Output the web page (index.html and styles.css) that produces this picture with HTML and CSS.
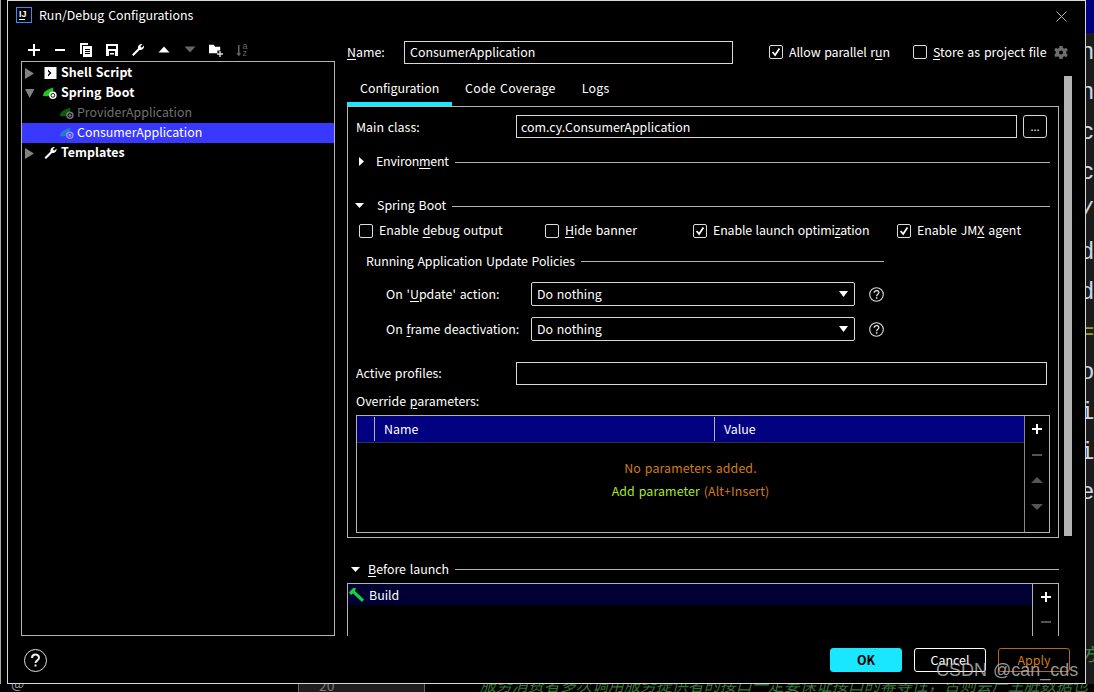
FILE: index.html
```html
<!DOCTYPE html>
<html lang="en">
<head>
<meta charset="utf-8">
<title>Run/Debug Configurations</title>
<link rel="stylesheet" href="styles.css">
</head>
<body>
<div class="desktop">
  <div class="edge-line"></div>
  <div class="navy-corner"></div>
  <div class="code-strip"><div class="c">n</div><div class="c">n</div><div class="c">c</div><div class="c">c</div><div class="c">/</div><div class="c">d</div><div class="c">d</div><div class="c olive">=</div><div class="c">o</div><div class="c">i</div><div class="c">i</div><div class="c">e</div><div class="c"></div><div class="c"></div><div class="c"></div><div class="c green">方</div></div>
  <div class="bottom-strip">
    <span class="gutter-at">@</span>
    <span class="gutter-num">20</span>
    <span class="comment">服务消费者多次调用服务提供者的接口一定要保证接口的幂等性，否则会产生脏数据也</span>
  </div>

  <div class="dialog">
    <header class="titlebar">
      <svg class="logo" viewBox="0 0 16 16"><rect x=".5" y=".5" width="15" height="15" fill="#000" stroke="#2f8fff"/><text x="3" y="9.500" class="logo-t">IJ</text><rect x="3" y="12" width="6" height="1" fill="#fff"/></svg>
      <span class="title">Run/Debug Configurations</span>
      <svg class="close" viewBox="0 0 11 11"><path d="M.5.5l10 10M10.500.5l-10 10" stroke="#bbb" fill="none"/></svg>
    </header>

    <div class="main">
      <aside class="left">
        <div class="toolbar">
          <span class="tool"><svg viewBox="0 0 14 14"><path d="M6 1h2v5h5v2H8v5H6V8H1V6h5z" fill="#fff"/></svg></span>
          <span class="tool"><svg viewBox="0 0 14 14"><path d="M2 6h10v2H2z" fill="#fff"/></svg></span>
          <span class="tool"><svg viewBox="0 0 14 14"><path d="M1 0h8v2H3v9H1z" fill="#fff"/><path d="M4 3h9v11H4zM6 6v1h5V6zm0 2v1h5V8zm0 2v1h5v-1z" fill="#fff" fill-rule="evenodd"/></svg></span>
          <span class="tool"><svg viewBox="0 0 14 14"><path d="M1 1h12v12H1zM3 3v3h8V3zM4 8v5h6V8z" fill="#fff" fill-rule="evenodd"/><path d="M5 10h4v1.500H5z" fill="#fff"/></svg></span>
          <span class="tool"><svg viewBox="0 0 14 14"><path d="M1 11.500l6-6C6.500 3 8.500.5 11.500 1L9.300 3.200l1.500 1.500L13 2.500c.5 3-2 5-4.500 4.500l-6 6z" fill="#fff"/></svg></span>
          <span class="tool"><svg viewBox="0 0 14 14"><path d="M7 3.500l5.500 6h-11z" fill="#fff"/></svg></span>
          <span class="tool"><svg viewBox="0 0 14 14"><path d="M1.500 3.500h11L7 9.500z" fill="#666"/></svg></span>
          <span class="tool"><svg viewBox="0 0 15 15"><path d="M0 2h5l1.500 2H12v4H9v3H0z" fill="#fff"/><path d="M11 8.500h1.500V11H15v1.500h-2.500V15H11v-2.500H8.500V11H11z" fill="#ddd"/></svg></span>
          <span class="tool"><svg viewBox="0 0 14 14"><path d="M3 2h1.500v8H6l-2.300 3.500L1.500 10H3z" fill="#666"/><text x="7.500" y="6" class="sort-t">a</text><text x="7.500" y="13" class="sort-t">z</text></svg></span>
        </div>
        <div class="tree">
          <div class="node"><svg class="tri" viewBox="0 0 9 11"><path d="M0 0l9 5.500L0 11z" fill="#808080"/></svg><svg class="nic" viewBox="0 0 14 14"><path d="M1 1h12v12H1z" fill="#fff"/><path d="M4.500 3.500L8 7l-3.500 3.500V8.500L6 7 4.500 5.500z" fill="#000"/></svg><b>Shell Script</b></div>
          <div class="node"><svg class="tri" viewBox="0 0 9 11"><path d="M0 1h9.500L4.700 10z" fill="#808080"/></svg><svg class="nic" viewBox="0 0 16 14"><path d="M0 10C0 5 5 3 11 1c0 3 0 5-2 7-3 3-6 3-9 2z" fill="#1ec81e"/><circle cx="10.500" cy="9.500" r="4" fill="#fff"/><circle cx="10.500" cy="9.500" r="2" fill="none" stroke="#000"/></svg><b>Spring Boot</b></div>
          <div class="node child"><svg class="nic" viewBox="0 0 16 14"><path d="M0 10C0 5 5 3 11 1c0 3 0 5-2 7-3 3-6 3-9 2z" fill="#0b5a0b"/><circle cx="10.500" cy="9.500" r="4" fill="#777"/><circle cx="10.500" cy="9.500" r="2" fill="none" stroke="#000"/></svg><span class="dim">ProviderApplication</span></div>
          <div class="node child selected"><svg class="nic" viewBox="0 0 16 14"><path d="M0 10C0 5 5 3 11 1c0 3 0 5-2 7-3 3-6 3-9 2z" fill="#2a78c8"/><circle cx="10.500" cy="9.500" r="4" fill="#8f8fff"/><circle cx="10.500" cy="9.500" r="2" fill="none" stroke="#3838ff"/></svg><span>ConsumerApplication</span></div>
          <div class="node"><svg class="tri" viewBox="0 0 9 11"><path d="M0 0l9 5.500L0 11z" fill="#808080"/></svg><svg class="nic" viewBox="0 0 14 14"><path d="M1 11.500l6-6C6.500 3 8.500.5 11.500 1L9.300 3.200l1.500 1.500L13 2.500c.5 3-2 5-4.500 4.500l-6 6z" fill="#fff"/></svg><b>Templates</b></div>
        </div>
      </aside>

      <section class="right">
        <div class="name-row">
          <label class="name-label"><u>N</u>ame:</label>
          <div class="input name-input">ConsumerApplication</div>
          <span class="check on allow"><svg viewBox="0 0 14 14"><path d="M3 7l3 3.500L11 3" fill="none" stroke="#fff" stroke-width="2"/></svg></span>
          <span class="allow-text">Allow parallel r<u>u</u>n</span>
          <span class="check store"></span>
          <span class="store-text"><u>S</u>tore as project file</span>
          <svg class="gear" viewBox="0 0 14 14"><path d="M5.500 0h3l.4 2 1.600.8 1.800-1 1.500 2.500-1.500 1.300v1.800l1.500 1.300-1.500 2.500-1.800-1-1.600.8-.4 2h-3l-.4-2-1.600-.8-1.800 1L.2 8.700l1.500-1.300V5.600L.2 4.300l1.500-2.500 1.800 1 1.600-.8zM7 4.500a2 2 0 100 4 2 2 0 000-4z" fill="#6e6e6e" fill-rule="evenodd"/></svg>
        </div>

        <nav class="tabs">
          <span class="tab active">Configuration</span>
          <span class="tab second">Code Coverage</span>
          <span class="tab third">Logs</span>
        </nav>

        <div class="panel">
          <div class="form-row main-class">
            <label class="field-label">Main class:</label>
            <div class="input main-input">com.cy.ConsumerApplication</div>
            <span class="dots">...</span>
          </div>

          <div class="divider env">
            <svg class="small-tri" viewBox="0 0 9 9"><path d="M2 0l5 4.500L2 9z" fill="#fff"/></svg>
            <span class="env-text">Environ<u>m</u>ent</span><i class="line"></i>
          </div>

          <div class="divider sb">
            <svg class="small-tri" viewBox="0 0 9 9"><path d="M0 2h9L4.500 7z" fill="#fff"/></svg>
            <span class="sb-text">Sprin<u>g</u> Boot</span><i class="line"></i>
          </div>

          <div class="checks">
            <div class="opt"><span class="check"></span><span>Enable <u>d</u>ebug output</span></div>
            <div class="opt"><span class="check"></span><span><u>H</u>ide banner</span></div>
            <div class="opt"><span class="check on"><svg viewBox="0 0 14 14"><path d="M3 7l3 3.500L11 3" fill="none" stroke="#fff" stroke-width="2"/></svg></span><span class="launch-opt">Enable launch optimi<u>z</u>ation</span></div>
            <div class="opt"><span class="check on"><svg viewBox="0 0 14 14"><path d="M3 7l3 3.500L11 3" fill="none" stroke="#fff" stroke-width="2"/></svg></span><span>Enable JM<u>X</u> agent</span></div>
          </div>

          <div class="divider policies"><span class="policies-text">Running Application Update Policies</span><i class="line"></i></div>

          <div class="policy first">
            <label>On '<u>U</u>pdate' action:</label>
            <div class="select">Do nothing<svg class="caret" viewBox="0 0 9 6"><path d="M0 0h9L4.500 6z" fill="#fff"/></svg></div>
            <svg class="help" viewBox="0 0 15 15"><circle cx="7.500" cy="7.500" r="6.800" fill="none" stroke="#ddd" stroke-width="1.100"/><path d="M5.200 5.800c0-3 4.700-3 4.700-.2 0 1.700-2.300 1.700-2.300 3.600" fill="none" stroke="#ddd" stroke-width="1.300"/><rect x="6.900" y="10.200" width="1.500" height="1.500" fill="#ddd"/></svg>
          </div>
          <div class="policy">
            <label>On <u>f</u>rame deactivation:</label>
            <div class="select">Do nothing<svg class="caret" viewBox="0 0 9 6"><path d="M0 0h9L4.500 6z" fill="#fff"/></svg></div>
            <svg class="help" viewBox="0 0 15 15"><circle cx="7.500" cy="7.500" r="6.800" fill="none" stroke="#ddd" stroke-width="1.100"/><path d="M5.200 5.800c0-3 4.700-3 4.700-.2 0 1.700-2.300 1.700-2.300 3.600" fill="none" stroke="#ddd" stroke-width="1.300"/><rect x="6.900" y="10.200" width="1.500" height="1.500" fill="#ddd"/></svg>
          </div>

          <div class="form-row profiles">
            <label class="field-label">Active profiles:</label>
            <div class="input profile-input"></div>
          </div>

          <div class="override-label">Override <u>p</u>arameters:</div>

          <div class="table">
            <div class="table-main">
              <div class="thead"><span class="th-check"></span><span class="th-name">Name</span><span class="th-value">Value</span></div>
              <div class="tbody">
                <div class="empty">No parameters added.</div>
                <div class="add"><span class="add-link">Add parameter</span> <span class="shortcut">(Alt+Insert)</span></div>
              </div>
            </div>
            <div class="side">
              <svg viewBox="0 0 12 12"><path d="M5 1h2v4h4v2H7v4H5V7H1V5h4z" fill="#fff"/></svg>
              <svg viewBox="0 0 12 12"><path d="M1 5h10v2H1z" fill="#555"/></svg>
              <svg viewBox="0 0 12 12"><path d="M6 2l6 6H0z" fill="#555"/></svg>
              <svg viewBox="0 0 12 12"><path d="M0 3h12l-6 6z" fill="#555"/></svg>
            </div>
          </div>
        </div>

        <div class="divider before">
          <svg class="small-tri" viewBox="0 0 9 9"><path d="M0 2h9L4.500 7z" fill="#fff"/></svg>
          <span class="before-text"><u>B</u>efore launch</span><i class="line"></i>
        </div>

        <div class="launch">
          <div class="launch-main">
            <div class="build"><svg class="hammer" viewBox="0 0 15 14"><path d="M0 4.500L4 0h3L6 3l9 8.500-2 2.500-9-8.500-2 1.500z" fill="#14d23c"/></svg><span>Build</span></div>
          </div>
          <div class="launch-side">
            <svg viewBox="0 0 12 12"><path d="M5 1h2v4h4v2H7v4H5V7H1V5h4z" fill="#fff"/></svg>
            <svg viewBox="0 0 12 12"><path d="M1 5h10v2H1z" fill="#555"/></svg>
          </div>
        </div>

        <div class="scrollbar"></div>
      </section>
    </div>

    <footer class="footer">
      <svg class="big-help" viewBox="0 0 23 23"><circle cx="11.500" cy="11.500" r="11" fill="none" stroke="#ddd"/><path d="M8 9c0-4.500 7-4.500 7-.3 0 2.700-3.500 2.600-3.500 5.300" fill="none" stroke="#eee" stroke-width="2"/><rect x="10.500" y="15.500" width="2" height="2" fill="#eee"/></svg>
      <div class="buttons">
        <button class="btn ok">OK</button>
        <button class="btn cancel">Cancel</button>
        <button class="btn apply">Apply</button>
      </div>
    </footer>
  </div>

  <div class="watermark">CSDN @can_cds</div>
</div>
</body>
</html>
```
FILE: styles.css
```css
* { box-sizing: border-box; }
html, body { margin: 0; padding: 0; height: 100%; overflow: hidden; background: #1b1b1b; }
body { font: 12.4px/20px "Noto Sans CJK SC", "Noto Sans", sans-serif; word-spacing: 1px; color: #fff; }
u { text-underline-offset: 2px; }
.desktop { position: relative; width: 1094px; height: 692px; overflow: hidden; }
.edge-line { position: absolute; left: 0; top: 0; width: 7px; height: 684px; background: #000; border-left: 1px solid #aaa; }
.navy-corner { position: absolute; right: 0; top: 0; width: 8px; height: 33px; background: #000080; }
.code-strip { position: absolute; left: 1086px; top: 33px; width: 8px; height: 651px; overflow: hidden; font: 24px/40px "Liberation Mono", monospace; color: #c9d8e6; }
.c { height: 40px; margin-left: -6px; }
.olive { color: #9a9a30; }
.green { color: #3f8a3f; font-family: "Noto Sans CJK SC", sans-serif; font-style: italic; font-size: 18px; }
.bottom-strip { position: absolute; left: 0; top: 684px; width: 1094px; height: 8px; overflow: hidden; background: #000; }
.gutter-at { position: absolute; left: 11px; top: -11px; font-size: 14px; color: #999; }
.gutter-num { position: absolute; left: 298px; top: 0; width: 127px; height: 8px; padding-left: 20px; background: #1e1e1e; border: solid #666; border-width: 0 1px; font-size: 14px; line-height: 2px; color: #777; }
.comment { position: absolute; left: 480px; top: -10px; font-size: 16px; font-style: italic; white-space: nowrap; color: #357535; }

.dialog { position: absolute; left: 7px; top: 0; width: 1079px; height: 684px; background: #000; border: 1px solid #d8d8d8; display: flex; flex-direction: column; }
.titlebar { height: 39px; flex: none; display: flex; align-items: flex-start; padding: 6px 0 0 8px; }
.logo { width: 16px; height: 16px; flex: none; }
.logo-t { font: bold 9px "Liberation Sans", sans-serif; fill: #fff; }
.title { margin: -1px 0 0 7px; line-height: 18px; }
.close { width: 11px; height: 11px; margin: 4px 18px 0 auto; }

.main { flex: 1; min-height: 0; display: flex; padding-left: 13px; }
.left { width: 314px; flex: none; display: flex; flex-direction: column; }
.toolbar { height: 21px; flex: none; display: flex; align-items: flex-start; }
.tool { width: 26px; height: 20px; display: flex; align-items: center; justify-content: center; }
.tool svg { width: 14px; height: 14px; overflow: visible; }
.sort-t { font: 9px "Liberation Sans", sans-serif; fill: #666; }
.tree { flex: 1; border: 1px solid #b4b4b4; padding-top: 1px; }
.node { height: 20px; display: flex; align-items: center; padding-left: 3px; white-space: nowrap; }
.node b { font-weight: 700; letter-spacing: .05px; }
.node span, .node b { position: relative; top: -1px; }
.tri { width: 9px; height: 11px; flex: none; margin-right: 9px; }
.nic { width: 15px; height: 14px; flex: none; margin-right: 3px; }
.child { padding-left: 38px; }
.child .nic { margin-right: 2px; }
.dim { color: #707070; }
.selected { background: #3838ff; }

.right { position: relative; margin-left: 12px; width: 725px; flex: none; overflow: hidden; }
.name-row { height: 24px; display: flex; align-items: center; white-space: nowrap; }
.name-label { width: 57px; flex: none; }
.input { border: 1px solid #d8d8d8; padding-left: 5px; height: 23px; line-height: 20px; flex: none; }
.name-input { width: 329px; }
.check { width: 14px; height: 14px; border: 1px solid #ddd; border-radius: 2px; flex: none; display: block; }
.check svg { display: block; width: 12px; height: 12px; }
.allow { margin-left: 36px; }
.allow-text { margin-left: 6px; width: 124px; flex: none; letter-spacing: -.1px; }
.store-text { margin-left: 6px; }
.gear { width: 14px; height: 14px; position: absolute; left: 707px; top: 6px; }
.tabs { height: 42px; display: flex; }
.tab { line-height: 20px; padding-top: 14px; }
.tab.active { width: 105px; padding-left: 13px; border-bottom: 4px solid #19e6ff; }
.second { margin-left: 13px; letter-spacing: .25px; }
.third { margin-left: 26px; letter-spacing: .2px; }

.panel { width: 712px; height: 432px; border: 1px solid #b4b4b4; padding: 8px 8px 0; }
.form-row { display: flex; align-items: center; }
.form-row label { position: relative; top: -1px; }
.main-class label { top: 0; }
.field-label { width: 160px; flex: none; }
.main-input { width: 501px; line-height: 22px; padding-left: 4px; }
.dots { width: 24px; height: 23px; margin-left: 6px; border: 1px solid #d8d8d8; border-radius: 3px; text-align: center; line-height: 20px; font-size: 11px; }
.divider { display: flex; align-items: center; height: 20px; white-space: nowrap; }
.divider > span { position: relative; top: -1px; }
.line { flex: 1; height: 1px; background: #b4b4b4; margin-left: 6px; }
.small-tri { width: 9px; height: 9px; flex: none; }
.env { margin-top: 14px; }
.env .small-tri { margin-left: 1px; position: relative; top: -1px; }
.env-text { margin-left: 10px; letter-spacing: -.2px; }
.sb { margin-top: 24px; }
.sb .small-tri { margin-left: -1px; position: relative; top: -1px; }
.sb-text { margin-left: 13px; }
.checks { margin: 5px 0 0 3px; height: 20px; display: grid; grid-template-columns: 186px 148px 204px 1fr; }
.opt { display: flex; align-items: center; white-space: nowrap; }
.opt > span:last-child { position: relative; top: -1px; }
.opt .check { margin-right: 6px; }
.launch-opt { letter-spacing: -.15px; }
.policies { margin: 10px 0 0 10px; width: 518px; }
.divider > .policies-text { letter-spacing: -.1px; top: 0; }
.policy { display: flex; align-items: center; margin: 11px 0 0 30px; }
.policy label { width: 145px; flex: none; }
.select { width: 324px; height: 24px; flex: none; border: 1px solid #d8d8d8; border-radius: 2px; padding-left: 5px; line-height: 22px; position: relative; }
.caret { position: absolute; right: 6px; top: 8px; width: 9px; height: 6px; }
.help { width: 15px; height: 15px; margin-left: 14px; }
.profiles { margin-top: 21px; }
.profile-input { width: 531px; }
.override-label { margin-top: 6px; }
.table { margin-top: 4px; width: 694px; height: 118px; border: 1px solid #b4b4b4; display: flex; }
.table-main { width: 667px; flex: none; display: flex; flex-direction: column; }
.thead { height: 27px; flex: none; background: #000080; border-bottom: 1px solid #333; display: flex; align-items: center; }
.th-check { width: 18px; height: 24px; border-right: 1px solid #b4b4b4; }
.th-name { width: 340px; height: 24px; padding-left: 9px; border-right: 1px solid #b4b4b4; line-height: 24px; }
.th-value { padding-left: 9px; }
.tbody { flex: 1; text-align: center; padding-top: 15px; letter-spacing: .1px; }
.empty { color: #d07c1a; height: 23px; }
.add-link { color: #a8e62c; }
.shortcut { color: #d07c1a; }
.side { flex: 1; border-left: 1px solid #888; display: flex; flex-direction: column; align-items: center; gap: 14px; padding-top: 7px; }
.side svg { width: 12px; height: 12px; flex: none; }
.before { margin-top: 21px; width: 712px; }
.divider.before > span { top: 0; }
.before .small-tri { margin-left: 4px; }
.before-text { margin-left: 8px; }
.launch { margin-top: 4px; width: 712px; height: 53px; border: solid #b4b4b4; border-width: 1px 1px 0; display: flex; }
.launch-main { flex: 1; }
.build { height: 21px; background: #000033; display: flex; align-items: center; padding-left: 1px; }
.hammer { width: 15px; height: 14px; margin-right: 5px; }
.launch-side { width: 26px; flex: none; border-left: 1px solid #b4b4b4; display: flex; flex-direction: column; align-items: center; gap: 13px; padding-top: 7px; }
.launch-side svg { width: 12px; height: 12px; flex: none; }
.scrollbar { position: absolute; left: 717px; top: 36px; width: 8px; height: 460px; background: #b4b4b4; }

.footer { height: 47px; flex: none; display: flex; justify-content: space-between; padding: 12px 15px 0 16px; }
.big-help { width: 23px; height: 23px; margin-top: 1px; }
.buttons { display: flex; gap: 12px; }
.btn { width: 72px; height: 24px; border: 1px solid #fff; border-radius: 3px; background: #000; color: #fff; font: 12.4px/20px "Noto Sans CJK SC", "Noto Sans", sans-serif; padding: 0; }
.ok { background: #19e6ff; border-color: #19e6ff; color: #000; font-weight: 700; }
.apply { color: #d07a1a; border-color: #b06a1e; }
.watermark { position: absolute; left: 936px; top: 658px; font: 18px/24px "Liberation Sans", sans-serif; color: rgba(190,190,190,.8); white-space: nowrap; }
```
